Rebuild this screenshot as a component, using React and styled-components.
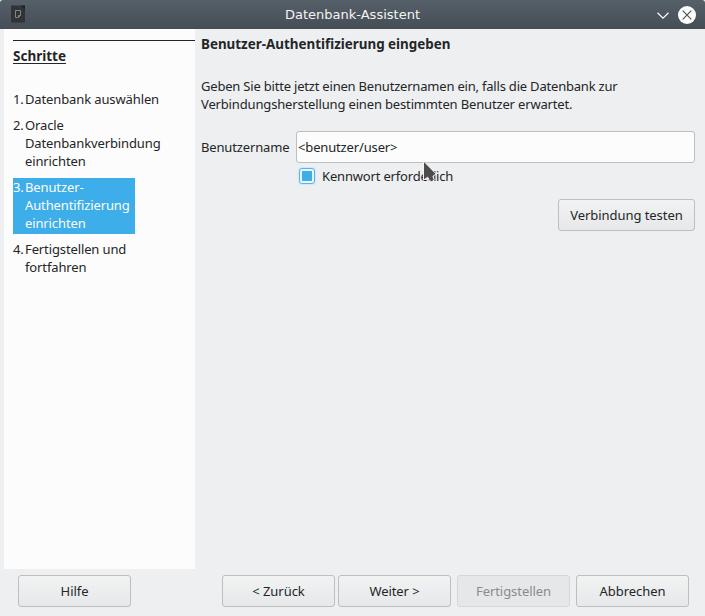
import React from "react";
import styled, { createGlobalStyle } from "styled-components";

const GlobalStyle = createGlobalStyle`
  * { box-sizing: border-box; }
  body {
    margin: 0;
    background: #eeeff1;
    color: #232627;
    font: 13px/18px "Noto Sans", sans-serif;
    font-feature-settings: "liga" 1;
  }
`;

const Window = styled.div`
  position: relative;
  display: flex;
  flex-direction: column;
  width: 705px;
  height: 616px;
  overflow: hidden;
  background: #eeeff1;
`;

const TitleBar = styled.header`
  display: grid;
  grid-template-columns: 56px 1fr 56px;
  align-items: center;
  height: 29px;
  flex: none;
  border-radius: 3px 3px 0 0;
  background: linear-gradient(#566068, #454d55);
`;

const AppIcon = styled.svg`
  display: block;
  margin: -1px 0 0 11px;
`;

const WindowTitle = styled.div`
  text-align: center;
  color: #f3f4f4;
  font-family: "DejaVu Sans", sans-serif;
`;

const WindowControls = styled.svg`
  display: block;
`;

const Body = styled.main`
  display: flex;
  height: 540px;
  flex: none;
`;

const Sidebar = styled.aside`
  width: 191px;
  margin-left: 4px;
  padding: 11px 0 0 9px;
  background: #fcfcfc;
`;

const SidebarHead = styled.div`
  height: 50px;
  padding-top: 6px;
  border-top: 1px solid #232627;
`;

const SidebarTitle = styled.h2`
  display: inline-block;
  height: 17px;
  margin: 0;
  border-bottom: 1px solid #232627;
  font-size: 13.5px;
  line-height: 18px;
  font-weight: 700;
`;

const Steps = styled.ol`
  display: flex;
  flex-direction: column;
  align-items: flex-start;
  gap: 6px;
  margin: 0;
  padding: 0;
  list-style: none;
`;

const Step = styled.li`
  display: grid;
  grid-template-columns: 12px auto;
  padding: 0 5px 2px 0;
  letter-spacing: -0.12px;
  white-space: pre-line;
  color: ${(p) => (p.$active ? "#fcfcfc" : "inherit")};
  background: ${(p) => (p.$active ? "#3daee9" : "none")};
`;

const Content = styled.section`
  flex: 1;
  padding: 6px 10px 0 6px;
`;

const Heading = styled.h1`
  margin: 0;
  font-size: 13.4px;
  line-height: 18px;
  font-weight: 700;
`;

const Intro = styled.p`
  margin: 24px 0 18px;
`;

const IntroLine = styled.span`
  display: block;
  white-space: nowrap;
  letter-spacing: ${(p) => p.$tracking}px;
`;

const Field = styled.label`
  display: grid;
  grid-template-columns: 95px 1fr;
  align-items: center;
  letter-spacing: -0.15px;
`;

const TextBox = styled.div`
  height: 32px;
  padding: 6px 1px;
  border: 1px solid #bcbebf;
  border-radius: 3px;
  background: #fcfcfc;
`;

const CheckRow = styled.label`
  display: flex;
  align-items: center;
  gap: 7px;
  height: 18px;
  margin: 4px 0 0 98px;
  letter-spacing: -0.17px;
`;

const CheckBox = styled.span`
  display: grid;
  place-items: center;
  width: 16px;
  height: 16px;
  border: 1px solid #55b8ec;
  border-radius: 3px;
  background: #e9f5fc;
  box-shadow: 0 0 0 1px #3daee922;

  &::after {
    content: "";
    width: 10px;
    height: 10px;
    background: #3daee9;
  }
`;

const Actions = styled.div`
  display: flex;
  justify-content: flex-end;
  margin-top: 14px;
`;

const Button = styled.button`
  width: ${(p) => p.$width || 113}px;
  height: 32px;
  padding: 0;
  border: 1px solid #bcbec0;
  border-radius: 3px;
  background: linear-gradient(#f1f2f2, #e7e8ea);
  color: #232627;
  font: inherit;
  letter-spacing: -0.06px;

  &:disabled {
    border-color: #d4d6d8;
    background: #e6e7e9;
    color: #898b8d;
  }
`;

const Footer = styled.footer`
  display: flex;
  justify-content: space-between;
  padding: 6px 16px 0 18px;
`;

const ButtonGroup = styled.div`
  display: flex;
  gap: ${(p) => p.$gap}px;
`;

const Pointer = styled.svg`
  position: absolute;
  left: 422px;
  top: 160px;
`;

const steps = [
  "Datenbank auswählen",
  "Oracle\nDatenbankverbindung\neinrichten",
  "Benutzer-\nAuthentifizierung\neinrichten",
  "Fertigstellen und\nfortfahren",
];

export default function App() {
  return (
    <Window>
      <GlobalStyle />
      <TitleBar>
        <AppIcon width="14" height="18" viewBox="0 0 14 18">
          <path d="M0 .5h14v17H0z" fill="#303437" />
          <path d="M10 .5h4v4z" fill="#1d2224" />
          <path d="M4.5 5.5h5v5l-2 2h-3zM9.5 10.5h-2v2" fill="none" stroke="#858585" />
        </AppIcon>
        <WindowTitle>Datenbank-Assistent</WindowTitle>
        <WindowControls width="56" height="28" viewBox="0 0 56 28" fill="none">
          <path d="M8.5 11.8l5.5 5.4 5.5-5.4" stroke="#fcfcfc" strokeWidth="1.2" />
          <circle cx="38" cy="14" r="9" fill="#fcfcfc" />
          <path d="M33.7 9.7l8.6 8.6M42.3 9.7l-8.6 8.6" stroke="#4b545c" strokeWidth="1.2" />
        </WindowControls>
      </TitleBar>
      <Body>
        <Sidebar>
          <SidebarHead>
            <SidebarTitle>Schritte</SidebarTitle>
          </SidebarHead>
          <Steps>
            {steps.map((label, i) => (
              <Step key={label} $active={i === 2}>
                <span>{i + 1}.</span>
                <span>{label}</span>
              </Step>
            ))}
          </Steps>
        </Sidebar>
        <Content>
          <Heading>Benutzer-Authentifizierung eingeben</Heading>
          <Intro>
            <IntroLine $tracking={-0.2}>
              Geben Sie bitte jetzt einen Benutzernamen ein, falls die Datenbank zur
            </IntroLine>
            <IntroLine $tracking={-0.155}>
              Verbindungsherstellung einen bestimmten Benutzer erwartet.
            </IntroLine>
          </Intro>
          <Field>
            <span>Benutzername</span>
            <TextBox>&lt;benutzer/user&gt;</TextBox>
          </Field>
          <CheckRow>
            <CheckBox />
            <span>Kennwort erforderlich</span>
          </CheckRow>
          <Actions>
            <Button $width={137}>Verbindung testen</Button>
          </Actions>
        </Content>
      </Body>
      <Footer>
        <Button>Hilfe</Button>
        <ButtonGroup $gap={6}>
          <ButtonGroup $gap={3}>
            <Button>&lt; Zurück</Button>
            <Button>Weiter &gt;</Button>
          </ButtonGroup>
          <Button disabled>Fertigstellen</Button>
          <Button>Abbrechen</Button>
        </ButtonGroup>
      </Footer>
      <Pointer width="15" height="23" viewBox="0 0 15 23">
        <path d="M1.5 1v19.2l4.2-3 1.8 3.5 2.2 1 2.6-1.6-1.4-3.8 3.3-2.3z" fill="#4d4d4d" stroke="#f4f4f5" />
      </Pointer>
    </Window>
  );
}
